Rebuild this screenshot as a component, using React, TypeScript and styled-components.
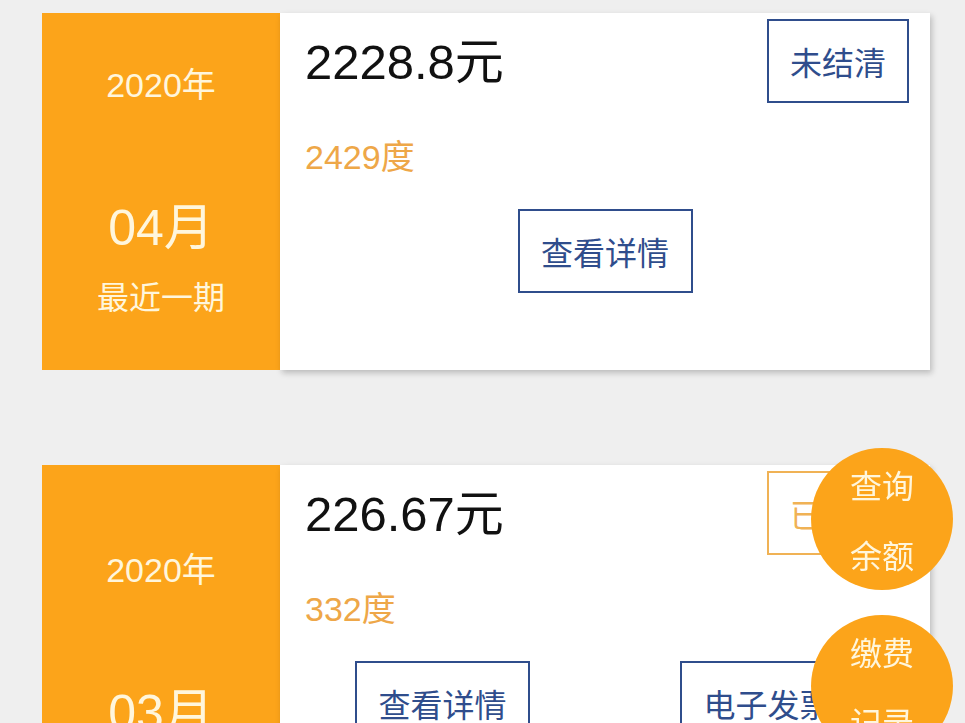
import React from 'react';
import styled, { createGlobalStyle } from 'styled-components';

const GlobalStyle = createGlobalStyle`
	html, body {
		margin: 0;
		padding: 0;
		background: #efefef;
	}
	body {
		font-family: 'Liberation Sans', 'Noto Sans CJK SC', sans-serif;
	}
`;

const ORANGE = '#fca41a';
const CREAM = '#fff6dc';
const BLUE = '#2f4d8c';

type Bill = {
	year: string;
	month: string;
	latest?: boolean;
	amount: string;
	usage: string;
	settled: boolean;
	invoice?: boolean;
};

const bills: Bill[] = [
	{ year: '2020年', month: '04月', latest: true, amount: '2228.8元', usage: '2429度', settled: false },
	{ year: '2020年', month: '03月', amount: '226.67元', usage: '332度', settled: true, invoice: true },
	{ year: '2020年', month: '02月', amount: '198.40元', usage: '301度', settled: true, invoice: true },
];

const Page = styled.div`
	display: flex;
	flex-direction: column;
	gap: 95px;
	padding: 13px 35px 40px 42px;
`;

const Card = styled.div`
	display: flex;
	height: 357px;
`;

const DateBlock = styled.div`
	width: 238px;
	flex-shrink: 0;
	background: ${ORANGE};
	color: ${CREAM};
	display: flex;
	flex-direction: column;
	align-items: center;
	justify-content: center;
`;

const Year = styled.div`
	font-size: 34px;
	line-height: 40px;
`;

const Month = styled.div`
	font-size: 50px;
	line-height: 48px;
	margin-top: 99px;
`;

const Latest = styled.div`
	font-size: 32px;
	line-height: 40px;
	margin-top: 26px;
`;

const Body = styled.div`
	flex: 1;
	background: #fff;
	box-shadow: 2px 3px 6px rgba(0, 0, 0, 0.22);
	display: flex;
	flex-direction: column;
	padding: 6px 21px 0 25px;
`;

const Header = styled.div`
	display: flex;
	justify-content: space-between;
	align-items: center;
`;

const Amount = styled.div`
	font-size: 49px;
	line-height: 56px;
	color: #111;
	margin-top: 2px;
`;

const Status = styled.div<{ $settled: boolean }>`
	width: 142px;
	height: 84px;
	box-sizing: border-box;
	border: 2px solid ${(p) => (p.$settled ? '#f0b255' : BLUE)};
	color: ${(p) => (p.$settled ? '#f0b255' : BLUE)};
	font-size: 32px;
	display: flex;
	align-items: center;
	justify-content: center;
`;

const Usage = styled.div`
	font-size: 34px;
	line-height: 40px;
	color: #eea748;
	margin-top: 34px;
`;

const Actions = styled.div`
	display: flex;
	justify-content: space-around;
	margin: 32px -21px 0 -25px;
`;

const ActionButton = styled.button`
	width: 175px;
	height: 84px;
	box-sizing: border-box;
	border: 2px solid ${BLUE};
	background: #fff;
	color: ${BLUE};
	font-family: 'Noto Sans CJK SC', sans-serif;
	font-size: 32px;
	padding: 0;
	cursor: pointer;
`;

const FloatStack = styled.div`
	position: fixed;
	right: 12px;
	top: 448px;
	display: flex;
	flex-direction: column;
	gap: 25px;
`;

const FloatCircle = styled.button`
	width: 142px;
	height: 142px;
	border-radius: 50%;
	border: none;
	background: ${ORANGE};
	color: ${CREAM};
	font-family: 'Noto Sans CJK SC', sans-serif;
	font-size: 32px;
	line-height: 70px;
	padding: 0;
	display: flex;
	flex-direction: column;
	align-items: center;
	justify-content: center;
	cursor: pointer;
`;

const BillCard: React.FC<{ bill: Bill }> = ({ bill }) => (
	<Card>
		<DateBlock>
			<Year>{bill.year}</Year>
			<Month>{bill.month}</Month>
			{bill.latest && <Latest>最近一期</Latest>}
		</DateBlock>
		<Body>
			<Header>
				<Amount>{bill.amount}</Amount>
				<Status $settled={bill.settled}>{bill.settled ? '已结清' : '未结清'}</Status>
			</Header>
			<Usage>{bill.usage}</Usage>
			<Actions>
				<ActionButton>查看详情</ActionButton>
				{bill.invoice && <ActionButton>电子发票</ActionButton>}
			</Actions>
		</Body>
	</Card>
);

const App: React.FC = () => (
	<>
		<GlobalStyle />
		<Page>
			{bills.map((b) => (
				<BillCard key={b.month} bill={b} />
			))}
		</Page>
		<FloatStack>
			<FloatCircle>
				<span>查询</span>
				<span>余额</span>
			</FloatCircle>
			<FloatCircle>
				<span>缴费</span>
				<span>记录</span>
			</FloatCircle>
		</FloatStack>
	</>
);

export default App;
